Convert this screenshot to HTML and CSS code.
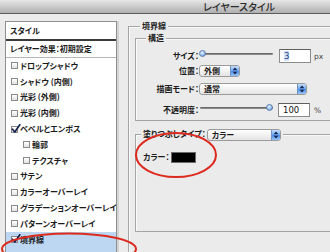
FILE: index.html
```html
<!DOCTYPE html>
<html lang="ja">
<head>
<meta charset="utf-8">
<title>レイヤースタイル</title>
<link rel="stylesheet" href="styles.css">
</head>
<body>
<div class="window">
  <div class="titlebar"><span class="title">レイヤースタイル</span></div>
  <div class="content">
    <div class="styles-panel">
      <div class="panel-head">スタイル</div>
      <div class="panel-preset">レイヤー効果：初期設定</div>
      <ul class="fx-list">
        <li><span class="cb"></span><span>ドロップシャドウ</span></li>
        <li><span class="cb"></span><span>シャドウ (内側)</span></li>
        <li><span class="cb"></span><span>光彩 (外側)</span></li>
        <li><span class="cb"></span><span>光彩 (内側)</span></li>
        <li><span class="cb checked"><svg class="tick" viewBox="0 0 10 10" width="10" height="10"><path d="M1.5 5.2 L3.8 8 L8.8 0.8" fill="none" stroke="#16234f" stroke-width="1.7" stroke-linecap="round" stroke-linejoin="round"/></svg></span><span>ベベルとエンボス</span></li>
        <li class="sub"><span class="cb"></span><span>輪郭</span></li>
        <li class="sub"><span class="cb"></span><span>テクスチャ</span></li>
        <li><span class="cb"></span><span>サテン</span></li>
        <li><span class="cb"></span><span>カラーオーバーレイ</span></li>
        <li><span class="cb"></span><span>グラデーションオーバーレイ</span></li>
        <li><span class="cb"></span><span>パターンオーバーレイ</span></li>
        <li class="selected"><span class="cb checked"><svg class="tick" viewBox="0 0 10 10" width="10" height="10"><path d="M1.5 5.2 L3.8 8 L8.8 0.8" fill="none" stroke="#16234f" stroke-width="1.7" stroke-linecap="round" stroke-linejoin="round"/></svg></span><span>境界線</span></li>
      </ul>
    </div>

    <fieldset class="group outer">
      <legend class="lg-outer">境界線</legend>

      <fieldset class="group structure">
        <legend class="lg-structure">構造</legend>

        <div class="row row-size">
          <span class="label">サイズ：</span>
          <span class="slider"><span class="track"></span><span class="knob knob-min"></span></span>
          <span class="num"><span class="sel">3</span></span>
          <span class="unit">px</span>
        </div>

        <div class="row row-pos">
          <span class="label">位置：</span>
          <span class="popup popup-pos"><span class="popup-text">外側</span><span class="stepper"><svg viewBox="0 0 8 10" width="8" height="10"><path d="M4 1.5 L6.3 4.2 H1.7 Z M4 8.5 L6.3 5.8 H1.7 Z" fill="#17264d"/></svg></span></span>
        </div>

        <div class="row row-blend">
          <span class="label">描画モード：</span>
          <span class="popup popup-blend"><span class="popup-text">通常</span><span class="stepper"><svg viewBox="0 0 8 10" width="8" height="10"><path d="M4 1.5 L6.3 4.2 H1.7 Z M4 8.5 L6.3 5.8 H1.7 Z" fill="#17264d"/></svg></span></span>
        </div>

        <div class="row row-opacity">
          <span class="label">不透明度：</span>
          <span class="slider"><span class="track"></span><span class="knob knob-max"></span></span>
          <span class="num num-op">100</span>
          <span class="unit unit-op">%</span>
        </div>
      </fieldset>

      <fieldset class="group fill">
        <legend class="lg-fill">塗りつぶしタイプ：<span class="popup popup-fill"><span class="popup-text">カラー</span><span class="stepper"><svg viewBox="0 0 8 10" width="8" height="10"><path d="M4 1.5 L6.3 4.2 H1.7 Z M4 8.5 L6.3 5.8 H1.7 Z" fill="#17264d"/></svg></span></span></legend>
        <div class="color-row">
          <span>カラー：</span>
          <span class="swatch"></span>
        </div>
      </fieldset>
    </fieldset>
  </div>

  <svg class="annotations" viewBox="0 0 330 252" width="330" height="252">
    <ellipse cx="176" cy="155" rx="40" ry="22" fill="none" stroke="#dc2a1e" stroke-width="2"/>
    <ellipse cx="69" cy="249" rx="67" ry="15.5" fill="none" stroke="#dc2a1e" stroke-width="2"/>
  </svg>
</div>
</body>
</html>
```

FILE: styles.css
```css
* { box-sizing: border-box; }

html, body {
  margin: 0;
  padding: 0;
}

body {
  width: 330px;
  height: 252px;
  overflow: hidden;
  background: #ebebeb;
  font-family: "Noto Sans CJK JP", "Noto Sans", sans-serif;
  font-size: 8px;
  font-weight: 600;
  color: #1b1b1b;
  font-feature-settings: "palt";
}

.window {
  position: relative;
  width: 330px;
  height: 252px;
  overflow: hidden;
  background: #ebebeb;
}

/* title bar */
.titlebar {
  height: 14px;
  display: flex;
  align-items: center;
  padding-left: 203px;
  background: linear-gradient(#e6e6e6, #b0b0b0);
  border-bottom: 1px solid #5c5c5c;
}

.title {
  font-size: 10px;
  font-weight: 500;
  line-height: 13px;
  color: #2b2b2b;
}

/* content */
.content {
  display: flex;
  align-items: flex-start;
  gap: 11px;
  padding: 7px 0 0 5px;
}

/* left styles list */
.styles-panel {
  flex: none;
  width: 112px;
  height: 250px;
  background: #fff;
  border: 1px solid #8e8e8e;
  box-shadow: 2px 0 0 #d3d3d3;
}

.panel-head {
  height: 19px;
  line-height: 17px;
  padding-left: 4px;
  border-bottom: 2px solid #3a3a3a;
}

.panel-preset {
  height: 17px;
  line-height: 16px;
  padding-left: 4px;
  border-bottom: 1px solid #b6b6b6;
}

.fx-list {
  list-style: none;
  margin: 0;
  padding: 0;
}

.fx-list li {
  height: 15.8px;
  display: flex;
  align-items: center;
  gap: 2px;
  padding-left: 5px;
  line-height: 10px;
  white-space: nowrap;
}

.fx-list li.sub {
  padding-left: 17px;
}

.fx-list li.selected {
  height: 24px;
  padding-bottom: 8.2px;
  background: #bdd6f2;
}

.cb {
  position: relative;
  flex: none;
  width: 7px;
  height: 7px;
  border: 1px solid #8a8a8a;
  background: linear-gradient(#ffffff, #e2e2e2);
}

.tick {
  position: absolute;
  left: -1px;
  top: -3px;
}

/* group boxes */
.group {
  margin: 0;
  min-width: 0;
  border: 1px solid #a4a4a4;
  box-shadow: inset 1px 1px 0 #fafafa;
}

.group legend {
  padding: 0 2px;
  background: #ebebeb;
}

.outer {
  flex: none;
  width: 260px;
  height: 250px;
  padding: 2px 0 0 6px;
}

.lg-outer {
  margin-left: 5px;
  line-height: 10px;
}

.structure {
  padding: 6px 0 3px 0;
}

.lg-structure {
  margin-left: 10px;
  line-height: 10px;
}

.row {
  display: flex;
  align-items: center;
}

.row-size { height: 14px; }
.row-pos { height: 12px; margin-top: 2px; }
.row-blend { height: 12px; margin-top: 6px; }
.row-opacity { height: 14px; margin-top: 8px; }

.label {
  flex: none;
  width: 63px;
  text-align: right;
  line-height: 10px;
  white-space: nowrap;
}

.slider {
  position: relative;
  flex: none;
  width: 74px;
  height: 8px;
  margin-top: -4px;
}

.track {
  position: absolute;
  left: 1px;
  right: 0;
  top: 3px;
  height: 2px;
  border-radius: 1px;
  background: linear-gradient(#5a5a5a, #9a9a9a);
}

.knob {
  position: absolute;
  top: 0;
  width: 7px;
  height: 7px;
  border-radius: 50%;
  border: 1px solid #5d7fae;
  background: radial-gradient(circle at 40% 35%, #eef6ff, #8db8ea 60%, #4f86cf);
}

.knob-min { left: 0; }
.knob-max { right: 0; }

.num {
  flex: none;
  width: 32px;
  height: 14px;
  margin-left: 6px;
  padding-left: 4px;
  background: #fff;
  border: 1px solid #8c8c8c;
  border-top-color: #5f5f5f;
  font-family: "DejaVu Sans", sans-serif;
  font-size: 8.5px;
  font-weight: normal;
  line-height: 12px;
  color: #111;
}

.num .sel {
  color: #1d3f8f;
  background: #cfe0f6;
}

.num-op { margin-left: 5px; }

.unit {
  margin-left: 3px;
  font-family: "DejaVu Sans", sans-serif;
  font-size: 7.5px;
  font-weight: normal;
  color: #444;
}

.unit-op { margin-left: 4px; }

/* popup buttons */
.popup {
  display: inline-flex;
  align-items: stretch;
  height: 12px;
  border: 1px solid #9b9b9b;
  border-radius: 3px;
  background: linear-gradient(#ffffff, #e4e4e4);
  vertical-align: middle;
  overflow: hidden;
}

.popup-text {
  flex: 1;
  padding-left: 4px;
  line-height: 10px;
}

.stepper {
  flex: none;
  width: 9px;
  display: flex;
  align-items: center;
  justify-content: center;
  border-left: 1px solid #6f93c4;
  background: linear-gradient(#c4defc, #6ea7f0 50%, #4a8ae6 51%, #9cc6f8);
}

.popup-pos { width: 41px; }
.popup-blend { width: 108px; }
.popup-fill { width: 74px; margin-left: 1px; }

.fill {
  margin-top: 7px;
  padding: 11px 0 68px 7px;
}

.lg-fill {
  margin-left: -2px;
  line-height: 12px;
  white-space: nowrap;
}

.color-row {
  display: flex;
  align-items: center;
  gap: 2px;
  height: 11px;
  line-height: 10px;
}

.swatch {
  width: 25px;
  height: 11px;
  background: #000;
  border: 1px solid #6a6a6a;
}

/* annotation overlay */
.annotations {
  position: absolute;
  left: 0;
  top: 0;
  pointer-events: none;
}
```
